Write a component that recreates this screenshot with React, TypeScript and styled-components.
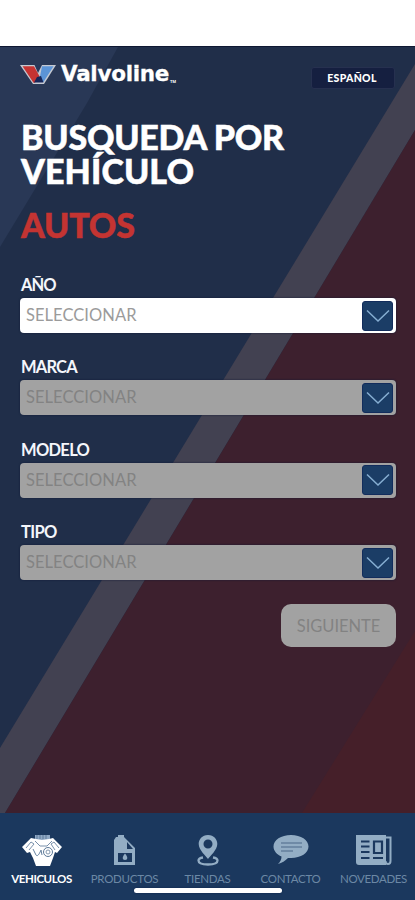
import React from "react";
import styled, { createGlobalStyle } from "styled-components";

const GlobalStyle = createGlobalStyle`
  * { box-sizing: border-box; }
  body { margin: 0; background: #fff; font-family: Lato, "Open Sans", sans-serif; }
`;

const Phone = styled.div`
  width: 415px;
  height: 900px;
  padding-top: 46px;
  display: flex;
  flex-direction: column;
  background: #fff;
  overflow: hidden;
`;

const Screen = styled.main`
  position: relative;
  isolation: isolate;
  height: 767px;
  padding: 17px 19px 0 20px;
  display: flex;
  flex-direction: column;
  background: #202e49;
  border-top: 1px solid #0e1832;
`;

const Backdrop = styled.svg`
  position: absolute;
  z-index: -1;
  left: 0;
  top: -1px;
`;

const Header = styled.header`
  height: 26px;
  display: flex;
  justify-content: space-between;
  align-items: flex-start;
`;

const Brand = styled.div`
  display: flex;
  align-items: flex-start;
  color: #fff;
`;

const Wordmark = styled.span`
  margin: -3px 0 0 5px;
  font: 700 21.5px/26px "DejaVu Sans", sans-serif;
  letter-spacing: -0.3px;
  -webkit-text-stroke: 0.3px #fff;
`;

const Trademark = styled.span`
  margin: 15px 0 0 1px;
  font: 700 4px/5px Roboto, sans-serif;
`;

const Language = styled.button`
  width: 84px;
  height: 22px;
  margin: 3px 1px 0 0;
  padding: 0 2px 0 0;
  border: 1px solid #26304f;
  border-radius: 3px;
  background: #151f40;
  color: #fff;
  font: 900 10.5px/16px Lato, sans-serif;
  letter-spacing: 0.3px;
`;

const Title = styled.h1`
  margin: 30px 0 0 1px;
  color: #fff;
  font: 900 34px/34px Lato, sans-serif;
  -webkit-text-stroke: 0.5px #fff;
`;

const TitleLine = styled.span<{ $spacing: number }>`
  display: block;
  white-space: nowrap;
  letter-spacing: ${(p) => p.$spacing}px;
`;

const Category = styled.h2`
  margin: 20px 0 0 1px;
  color: #c43432;
  font: 900 34px/34px Lato, sans-serif;
  letter-spacing: -0.2px;
  -webkit-text-stroke: 0.5px #c43432;
`;

const Form = styled.form`
  margin-top: 33px;
  display: flex;
  flex-direction: column;
`;

const Field = styled.div`
  height: 82.4px;
  display: flex;
  flex-direction: column;
`;

const Label = styled.label<{ $spacing: number }>`
  height: 23px;
  padding-left: 1px;
  color: #f4f6fb;
  font: 700 16.5px/20px Lato, sans-serif;
  letter-spacing: ${(p) => p.$spacing}px;
`;

const Select = styled.div<{ $disabled?: boolean }>`
  height: 35px;
  padding: 0 3px 0 6px;
  display: flex;
  align-items: center;
  justify-content: space-between;
  border-radius: 4px;
  background: ${(p) => (p.$disabled ? "#a2a2a2" : "#fff")};
  color: ${(p) => (p.$disabled ? "#838383" : "#9b9b9b")};
  box-shadow: 0 0 2px #101936;
`;

const Placeholder = styled.span`
  margin-top: -1px;
  font: 400 16.5px/20px Lato, sans-serif;
  letter-spacing: 0.05px;
`;

const Arrow = styled.span`
  width: 31px;
  height: 30px;
  display: grid;
  place-items: center;
  border-radius: 3px;
  border: 1px solid #122c5c;
  background: #1b3d66;
`;

const Next = styled.button`
  align-self: flex-end;
  width: 115px;
  height: 43px;
  margin: -1px 0 0;
  padding: 2px 0 0;
  border: 0;
  border-radius: 10px;
  background: #a2a2a2;
  color: #828282;
  font: 400 16.5px/41px Lato, sans-serif;
  letter-spacing: -0.05px;
`;

const TabBar = styled.nav`
  position: relative;
  height: 87px;
  padding-top: 20px;
  display: grid;
  grid-template-columns: repeat(5, 83px);
  background: #1b385e;
`;

const Tab = styled.a<{ $active?: boolean }>`
  display: flex;
  flex-direction: column;
  align-items: center;
  color: ${(p) => (p.$active ? "#fff" : "#93adc4")};
`;

const TabIcon = styled.svg`
  display: block;
  width: 42px;
  height: 36px;
`;

const TabText = styled.span<{ $active?: boolean; $spacing: number }>`
  margin-top: 2px;
  color: ${(p) => (p.$active ? "#fff" : "#6c88a5")};
  font: ${(p) => (p.$active ? 700 : 400)} 11.5px/16px Lato, sans-serif;
  letter-spacing: ${(p) => p.$spacing}px;
  white-space: nowrap;
`;

const HomeIndicator = styled.div`
  position: absolute;
  left: 134px;
  bottom: 7px;
  width: 148px;
  height: 5px;
  border-radius: 3px;
  background: #fff;
  box-shadow: 0 0 2px #0c1f49;
`;

const fields = [
  { label: "AÑO", spacing: -0.9 },
  { label: "MARCA", spacing: -0.8 },
  { label: "MODELO", spacing: -0.7 },
  { label: "TIPO", spacing: -0.7 },
];

const EngineIcon = () => (
  <TabIcon viewBox="0 0 42 36">
    <path d="M14 2h15v5H14z" fill="#8fa8c5" />
    <path d="M16 2v4M19 2v4M22 2v4M25 2v4" stroke="#496786" strokeWidth=".7" />
    <path d="M1 14 10 5l5 1 6 1 7-1 4-1 9 9-5 6-2-1-2 6-3 8H15l-3-8-3-6-3 1z" fill="currentColor" />
    <path d="m5 15 5-6 3 2-5 6m30-2-5-6-3 2 4 6M14 8l5 5h7l5-5" fill="none" stroke="#7890ab" strokeWidth="1" />
    <circle cx="27" cy="19" r="4.5" fill="none" stroke="#5b7897" />
    <circle cx="27" cy="19" r="2" fill="none" stroke="#8398ae" />
    <path d="m12 16 3 6c2 3 5-5 5-5l1 5" fill="none" stroke="#6783a0" />
  </TabIcon>
);

const OilIcon = () => (
  <TabIcon viewBox="0 0 42 36">
    <path fill="currentColor" fillRule="evenodd" d="M12 4h2V2h6v2l11 11v17H10V7zM23 9v7h6zM14 20v9h14v-9z" />
    <path fill="currentColor" d="M21 20.5c3 3.5 3 6.5 0 6.5s-3-3 0-6.5" />
  </TabIcon>
);

const PinIcon = () => (
  <TabIcon viewBox="0 0 42 36">
    <path fill="currentColor" fillRule="evenodd" d="M21 2c6 0 9.3 4.5 9.3 9C30.3 17 23 23 21 26c-2-3-9.3-9-9.3-15 0-4.5 3.3-9 9.3-9m0 4.500a4.500 4.500 0 1 0 0 9 4.500 4.500 0 0 0 0-9" />
    <path d="M16 24.500c-3 .5-4.500 1.500-4.500 3 0 2.500 4 4 9.500 4s9.500-1.500 9.500-4c0-1.500-1.500-2.500-4.500-3" fill="none" stroke="currentColor" strokeWidth="2.300" />
  </TabIcon>
);

const ChatIcon = () => (
  <TabIcon viewBox="0 0 42 36">
    <path fill="currentColor" d="M21 2c10 0 17.500 5 17.500 11.500S31 25 21 25h-3c-3 3-6 5-10 6 2-2 3.500-4 3.500-7.500C7 21.500 3.500 18 3.500 13.500 3.500 7 11 2 21 2" />
    <path d="M11 10h21M11 14h21M11 18h12" stroke="#647f9c" strokeWidth="1.500" />
  </TabIcon>
);

const NewsIcon = () => (
  <TabIcon viewBox="0 0 42 36">
    <path fill="currentColor" d="M3 2h30v30H6a3 3 0 0 1-3-3z" />
    <path d="M33 4.500h4.500V28c0 4-5 4-5 0" fill="none" stroke="currentColor" strokeWidth="2" />
    <path d="M8 8.500h8.500M8 13.500h8.500M8 19h8.500M8 25h8.500M20 25h10M21 8.500h8V20h-8z" fill="none" stroke="#1b385e" strokeWidth="2.200" />
  </TabIcon>
);

const tabs = [
  { text: "VEHICULOS", spacing: -0.4, Icon: EngineIcon, active: true },
  { text: "PRODUCTOS", spacing: -0.25, Icon: OilIcon },
  { text: "TIENDAS", spacing: -0.3, Icon: PinIcon },
  { text: "CONTACTO", spacing: -0.3, Icon: ChatIcon },
  { text: "NOVEDADES", spacing: -0.35, Icon: NewsIcon },
];

export default function App() {
  return (
    <>
      <GlobalStyle />
      <Phone>
        <Screen>
          <Backdrop width="415" height="767" viewBox="0 46 415 767" aria-hidden="true">
            <path d="M0 47h118L87 103 0 247z" fill="#293856" />
            <path d="M415 64v66L5 813H0v-65z" fill="#424151" />
            <path d="M415 130v683H5z" fill="#3d202e" />
            <path d="M415 631v182H302z" fill="#451f29" />
          </Backdrop>
          <Header>
            <Brand>
              <svg width="36" height="21" viewBox="0 0 36 21" aria-label="Valvoline">
                <path d="M0 1h36L24 20H13z" fill="#c5c9d2" />
                <path d="M2.500 2.200h11.500l5.500 10L15 18.800h-1.500z" fill="#c63332" />
                <path d="M22 2.200h11.500L23.500 18h-5.500l2-5.500z" fill="#5b94d7" />
                <path d="m17 13 4-1 2.500 6.500H14z" fill="#18275a" />
                <path d="M14.500 1h7.500l-4 8z" fill="#26375a" />
              </svg>
              <Wordmark>Valvoline</Wordmark>
              <Trademark>TM</Trademark>
            </Brand>
            <Language>ESPAÑOL</Language>
          </Header>
          <Title>
            <TitleLine $spacing={-0.25}>BUSQUEDA POR</TitleLine>
            <TitleLine $spacing={0.1}>VEHÍCULO</TitleLine>
          </Title>
          <Category>AUTOS</Category>
          <Form>
            {fields.map((f, i) => (
              <Field key={f.label}>
                <Label $spacing={f.spacing}>{f.label}</Label>
                <Select $disabled={i > 0}>
                  <Placeholder>SELECCIONAR</Placeholder>
                  <Arrow>
                    <svg width="24" height="14" viewBox="0 0 24 14">
                      <path d="m1 1.500 11 10.500L23 1.500" fill="none" stroke="#86aed2" strokeWidth="1.500" />
                    </svg>
                  </Arrow>
                </Select>
              </Field>
            ))}
            <Next type="button">SIGUIENTE</Next>
          </Form>
        </Screen>
        <TabBar>
          {tabs.map(({ text, spacing, Icon, active }) => (
            <Tab key={text} $active={active}>
              <Icon />
              <TabText $active={active} $spacing={spacing}>{text}</TabText>
            </Tab>
          ))}
          <HomeIndicator />
        </TabBar>
      </Phone>
    </>
  );
}
